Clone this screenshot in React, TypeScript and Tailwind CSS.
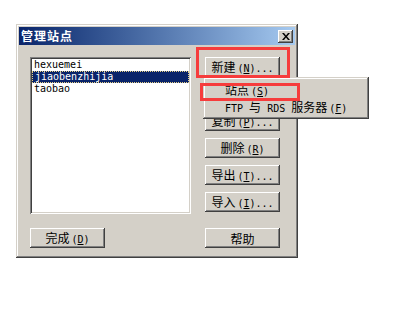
import type { ReactNode } from 'react';

const CJK = /[\u3000-\u9fff\uff00-\uffef]/;

// split a label into CJK / latin runs so each gets the bitmap-ish size it had
function Txt({ text }: { text: string }) {
  const runs: { cjk: boolean; s: string }[] = [];
  for (const ch of text) {
    const cjk = CJK.test(ch);
    const last = runs[runs.length - 1];
    if (last && last.cjk === cjk) last.s += ch;
    else runs.push({ cjk, s: ch });
  }
  return (
    <>
      {runs.map((r, i) =>
        r.cjk ? (
          <span key={i} className="font-['Noto_Sans_CJK_SC',sans-serif] text-[12px]">
            {r.s}
          </span>
        ) : (
          <span key={i} className="whitespace-pre font-['DejaVu_Sans_Mono',monospace] text-[10px]">
            {r.s}
          </span>
        ),
      )}
    </>
  );
}

function Label({ text, mn, tail = '' }: { text: string; mn?: string; tail?: string }) {
  return (
    <span className="inline-flex items-baseline leading-none">
      <Txt text={text} />
      {mn && (
        <span className="ml-[2px] whitespace-pre font-['DejaVu_Sans_Mono',monospace] text-[10px]">
          (<span className="underline underline-offset-1">{mn}</span>){tail}
        </span>
      )}
    </span>
  );
}

function Btn({ children }: { children?: ReactNode }) {
  return (
    <button
      type="button"
      className="flex h-[20px] w-[75px] items-center justify-center bg-[#d4d0c8] pt-[1px] text-black shadow-[inset_-1px_-1px_#404040,inset_1px_1px_#ffffff,inset_-2px_-2px_#808080,inset_2px_2px_#d4d0c8]"
    >
      {children}
    </button>
  );
}

const SITES = ['hexuemei', 'jiaobenzhijia', 'taobao'];

export default function App() {
  return (
    <div className="h-[315px] w-[409px] overflow-hidden bg-white pl-[16px] pt-[24px]">
      <div className="relative h-[234px] w-[282px] bg-[#d4d0c8] p-[3px] shadow-[inset_-1px_-1px_#404040,inset_1px_1px_#d4d0c8,inset_-2px_-2px_#808080,inset_2px_2px_#ffffff]">
        {/* title bar */}
        <div className="flex h-[18px] items-center justify-between bg-linear-to-r from-[#0a246a] to-[#a6caf0] pl-[2px] pr-[2px]">
          <span className="font-['Noto_Sans_CJK_SC',sans-serif] text-[12px] font-bold tracking-[1px] text-white">
            管理站点
          </span>
          <span className="flex h-[13px] w-[15px] items-center justify-center bg-[#d4d0c8] shadow-[inset_-1px_-1px_#404040,inset_1px_1px_#ffffff,inset_-2px_-2px_#808080]">
            <svg width="8" height="7" viewBox="0 0 8 7">
              <path d="M0 0h2l2 2.5L6 0h2L5 3.5 8 7H6L4 4.5 2 7H0l3-3.5z" fill="#000" />
            </svg>
          </span>
        </div>

        <div className="pl-[11px] pt-[12px]">
          <div className="flex gap-[14px]">
            {/* site list */}
            <div className="h-[157px] w-[161px] bg-white p-[2px] shadow-[inset_1px_1px_#808080,inset_-1px_-1px_#ffffff,inset_2px_2px_#404040,inset_-2px_-2px_#d4d0c8]">
              {SITES.map((s, i) => (
                <div
                  key={s}
                  className={`flex h-[12px] items-center pl-[2px] font-['DejaVu_Sans_Mono',monospace] text-[10px] leading-none ${
                    i === 1
                      ? 'border border-dotted border-[#e6cf86] bg-[#0a246a] pl-[1px] text-white'
                      : 'text-black'
                  }`}
                >
                  {s}
                </div>
              ))}
            </div>

            <div className="flex flex-col gap-[7px]">
              <Btn>
                <Label text="新建" mn="N" tail="..." />
              </Btn>
              {/* fully hidden under the popup menu */}
              <Btn />
              <Btn>
                <Label text="复制" mn="P" tail="..." />
              </Btn>
              <Btn>
                <Label text="删除" mn="R" />
              </Btn>
              <Btn>
                <Label text="导出" mn="T" tail="..." />
              </Btn>
              <Btn>
                <Label text="导入" mn="I" tail="..." />
              </Btn>
            </div>
          </div>

          <div className="mt-[14px] flex w-[250px] justify-between">
            <Btn>
              <Label text="完成" mn="D" />
            </Btn>
            <Btn>
              <Label text="帮助" />
            </Btn>
          </div>
        </div>

        {/* dropdown of 新建 */}
        <div className="absolute left-[187px] top-[53px] z-10 h-[42px] w-[166px] bg-[#d4d0c8] px-[3px] pt-[5px] shadow-[inset_-1px_-1px_#404040,inset_1px_1px_#d4d0c8,inset_-2px_-2px_#808080,inset_2px_2px_#ffffff]">
          <div className="flex h-[17px] items-center pl-[19px] text-black">
            <Label text="站点" mn="S" />
          </div>
          <div className="flex h-[17px] items-center pl-[19px] text-black">
            <Label text="FTP 与 RDS 服务器" mn="F" />
          </div>
        </div>

        {/* red annotation boxes */}
        <div className="pointer-events-none absolute left-[180px] top-[23px] z-20 h-[31px] w-[94px] border-[3px] border-[#f63c3c]" />
        <div className="pointer-events-none absolute left-[184px] top-[59px] z-20 h-[18px] w-[100px] border-[3px] border-[#f63c3c]" />
      </div>
    </div>
  );
}
